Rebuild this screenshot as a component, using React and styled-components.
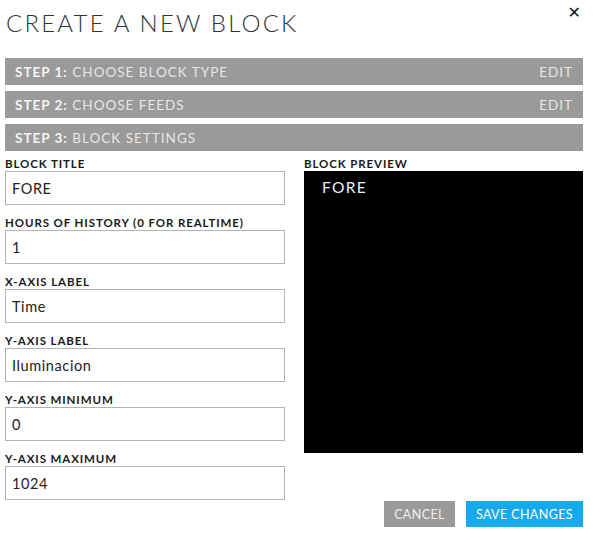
import React from 'react';
import styled, { createGlobalStyle } from 'styled-components';

const COLORS = {
  text: '#222222',
  bar: '#9a9a9a',
  barText: '#e6e6e6',
  border: '#b3b3b3',
  blue: '#17a9ec',
};

const GlobalStyle = createGlobalStyle`
  body {
    margin: 0;
    background: #ffffff;
    font-family: Lato, "Open Sans", "Liberation Sans", sans-serif;
    color: ${COLORS.text};
  }
`;

const Modal = styled.div`
  width: 594px;
  height: 555px;
  box-sizing: border-box;
  padding: 0 11px 0 5px;
  display: flex;
  flex-direction: column;
  position: relative;
`;

const Title = styled.h1`
  margin: 0;
  height: 58px;
  padding: 8px 0 0 1px;
  box-sizing: border-box;
  font-size: 24px;
  font-weight: 300;
  letter-spacing: 2.2px;
  color: #333;
`;

const Close = styled.span`
  position: absolute;
  top: 3px;
  right: 13px;
  font-family: "DejaVu Sans", sans-serif;
  font-size: 16px;
  font-weight: 700;
  color: #111;
`;

const Steps = styled.div`
  display: flex;
  flex-direction: column;
  gap: 6px;
`;

const StepBar = styled.div`
  height: 27px;
  background: ${COLORS.bar};
  display: flex;
  align-items: center;
  justify-content: space-between;
  padding: 0 10px 0 10px;
  font-size: 13.5px;
  letter-spacing: 1px;
  color: ${COLORS.barText};
`;

const StepNum = styled.strong`
  font-weight: 700;
  color: #f4f4f4;
`;

const Body = styled.div`
  display: grid;
  grid-template-columns: 280px 279px;
  column-gap: 19px;
  margin-top: 5px;
`;

const Fields = styled.div`
  display: flex;
  flex-direction: column;
  gap: 10px;
`;

const Field = styled.div`
  display: flex;
  flex-direction: column;
`;

const Label = styled.label`
  font-size: 11.5px;
  font-weight: 700;
  letter-spacing: 0.9px;
  line-height: 15px;
  color: #1a1a1a;
`;

const Input = styled.input`
  height: 34px;
  box-sizing: border-box;
  border: 1px solid ${COLORS.border};
  padding: 0 6px;
  font-family: Lato, "Open Sans", sans-serif;
  font-size: 14.5px;
  letter-spacing: 0.6px;
  color: #222;
  background: #fff;
  outline: none;
`;

const Preview = styled.div`
  display: flex;
  flex-direction: column;
`;

const PreviewBox = styled.div`
  height: 282px;
  background: #000;
  color: #f0f0f0;
  padding: 7px 18px;
  box-sizing: border-box;
  font-size: 15.5px;
  letter-spacing: 1.3px;
`;

const Footer = styled.div`
  display: flex;
  justify-content: flex-end;
  gap: 11px;
  margin-top: 1px;
`;

const Button = styled.button`
  height: 26px;
  border: none;
  padding: 0 10px;
  background: ${p => (p.$primary ? COLORS.blue : COLORS.bar)};
  color: ${p => (p.$primary ? '#ffffff' : '#eeeeee')};
  font-family: Lato, "Open Sans", sans-serif;
  font-size: 12.5px;
  letter-spacing: 0.4px;
  cursor: pointer;
`;

const fields = [
  ['BLOCK TITLE', 'FORE'],
  ['HOURS OF HISTORY (0 FOR REALTIME)', '1'],
  ['X-AXIS LABEL', 'Time'],
  ['Y-AXIS LABEL', 'Iluminacion'],
  ['Y-AXIS MINIMUM', '0'],
  ['Y-AXIS MAXIMUM', '1024'],
];

export default function App() {
  return (
    <>
      <GlobalStyle />
      <Modal>
        <Title>CREATE A NEW BLOCK</Title>
        <Close>✕</Close>
        <Steps>
          <StepBar>
            <span><StepNum>STEP 1:</StepNum> CHOOSE BLOCK TYPE</span>
            <span>EDIT</span>
          </StepBar>
          <StepBar>
            <span><StepNum>STEP 2:</StepNum> CHOOSE FEEDS</span>
            <span>EDIT</span>
          </StepBar>
          <StepBar>
            <span><StepNum>STEP 3:</StepNum> BLOCK SETTINGS</span>
          </StepBar>
        </Steps>
        <Body>
          <Fields>
            {fields.map(([label, value]) => (
              <Field key={label}>
                <Label>{label}</Label>
                <Input defaultValue={value} />
              </Field>
            ))}
          </Fields>
          <Preview>
            <Label>BLOCK PREVIEW</Label>
            <PreviewBox>FORE</PreviewBox>
          </Preview>
        </Body>
        <Footer>
          <Button>CANCEL</Button>
          <Button $primary>SAVE CHANGES</Button>
        </Footer>
      </Modal>
    </>
  );
}
